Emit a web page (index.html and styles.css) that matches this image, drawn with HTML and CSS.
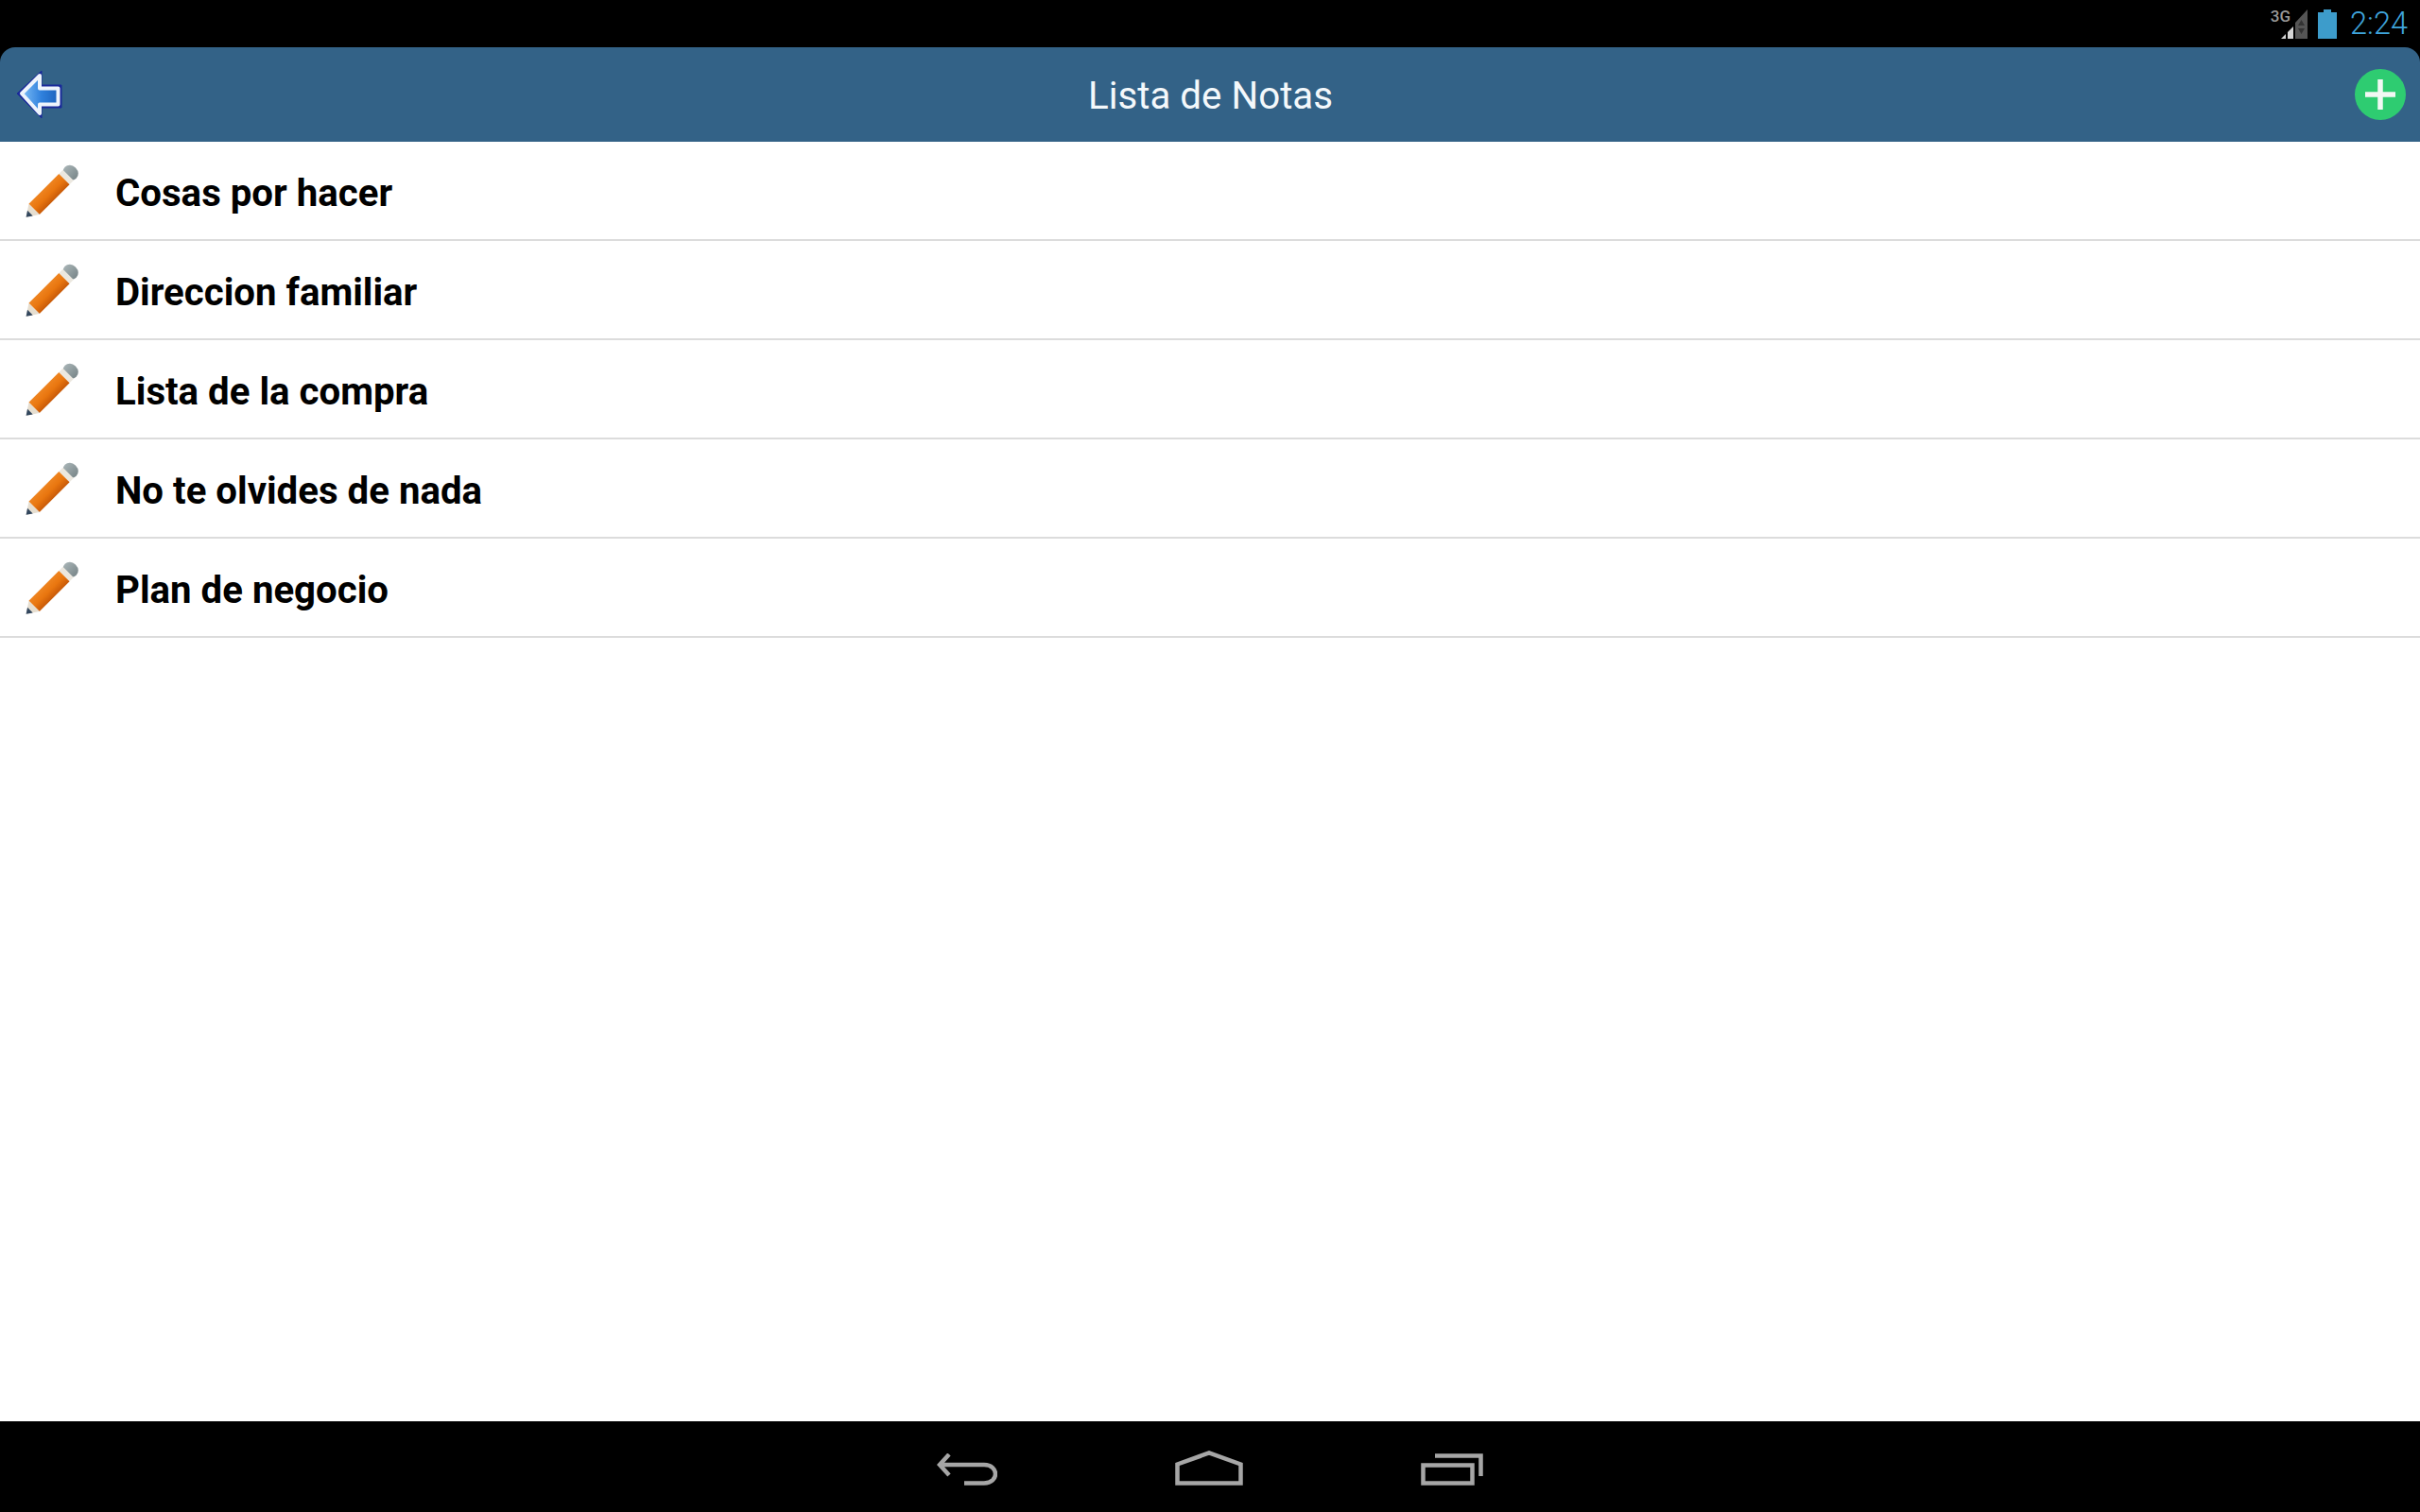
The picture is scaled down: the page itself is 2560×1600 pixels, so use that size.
FILE: index.html
```html
<!DOCTYPE html>
<html lang="es">
  <head>
    <meta charset="UTF-8" />
    <title>Lista de Notas</title>
    <link rel="stylesheet" href="styles.css">
  </head>
  <body>
    <svg class="defs" width="0" height="0">
      <defs>
        <linearGradient id="arrowFill" x1="0" y1="0" x2="1" y2="0">
          <stop offset="0" stop-color="#7cbcf6" />
          <stop offset="0.55" stop-color="#2f80dc" />
          <stop offset="1" stop-color="#1c62bd" />
        </linearGradient>
        <linearGradient id="pencilBody" gradientUnits="userSpaceOnUse" x1="0" y1="-8" x2="0" y2="8">
          <stop offset="0" stop-color="#ee8420" />
          <stop offset="0.5" stop-color="#e9760f" />
          <stop offset="1" stop-color="#c85a08" />
        </linearGradient>
        <linearGradient id="pencilEnd" gradientUnits="userSpaceOnUse" x1="0" y1="-8" x2="0" y2="8">
          <stop offset="0" stop-color="#a4b0b2" />
          <stop offset="1" stop-color="#7c898c" />
        </linearGradient>
        <g id="pencil">
          <g transform="translate(31.500 31) rotate(-45)">
            <rect x="21" y="-8.500" width="15" height="17" rx="8" fill="url(#pencilEnd)" />
            <rect x="19" y="-8" width="6" height="16" fill="#ece8e0" />
            <rect x="-26" y="-8" width="45" height="16" fill="url(#pencilBody)" />
            <path d="M-26 -8 L-38 0 L-26 8 Z" fill="#e6ded0" />
            <path d="M-32 -4 L-38 0 L-32 4 Z" fill="#33475e" />
          </g>
        </g>
      </defs>
    </svg>

    <div class="status-bar">
      <span class="net-label">3G</span>
      <svg class="signal" width="28" height="31" viewBox="0 0 28 31">
        <path d="M28 0 V31 H15 V14 Z" fill="#555" />
        <path d="M7 31 V24 L13 18 V31 Z" fill="#d4d4d4" />
        <path d="M0 31 L5 26 V31 Z" fill="#d4d4d4" />
        <path d="M18 17 L21.500 11 L25 17 Z M18 20 H25 L21.500 26 Z" fill="#333" />
      </svg>
      <svg class="battery" width="20" height="31" viewBox="0 0 20 31">
        <path d="M6 0 H14 V3 H20 V31 H0 V3 H6 Z" fill="#3d9ccb" />
      </svg>
      <span class="clock">2:24</span>
    </div>

    <header class="title-bar">
      <svg class="back-icon" width="54" height="54" viewBox="0 0 54 54">
        <path d="M28 2 L2 26 L28 52 L28 41 L49 41 L49 17 L28 17 Z" fill="#1a2a9a" stroke="#1a2a9a" stroke-width="1" stroke-linejoin="round" />
        <path d="M26 7 L7 26 L26 47 L26 37.500 L45.500 37.500 L45.500 20.500 L26 20.500 Z" fill="url(#arrowFill)" stroke="#eef4fc" stroke-width="4" stroke-linejoin="round" />
      </svg>
      <h1>Lista de Notas</h1>
      <svg class="add-icon" width="54" height="54" viewBox="0 0 54 54">
        <circle cx="27" cy="27" r="27" fill="#2ecc71" />
        <path d="M27 11 V43 M11 27 H43" stroke="#f2f8f4" stroke-width="5.500" />
      </svg>
    </header>

    <main class="notes">
      <div class="note">
        <svg class="pencil" width="60" height="60" viewBox="0 0 60 60"><use href="#pencil" /></svg>
        <span>Cosas por hacer</span>
      </div>
      <div class="note">
        <svg class="pencil" width="60" height="60" viewBox="0 0 60 60"><use href="#pencil" /></svg>
        <span>Direccion familiar</span>
      </div>
      <div class="note">
        <svg class="pencil" width="60" height="60" viewBox="0 0 60 60"><use href="#pencil" /></svg>
        <span>Lista de la compra</span>
      </div>
      <div class="note">
        <svg class="pencil" width="60" height="60" viewBox="0 0 60 60"><use href="#pencil" /></svg>
        <span>No te olvides de nada</span>
      </div>
      <div class="note">
        <svg class="pencil" width="60" height="60" viewBox="0 0 60 60"><use href="#pencil" /></svg>
        <span>Plan de negocio</span>
      </div>
    </main>

    <nav class="nav-bar">
      <svg width="64" height="34" viewBox="0 0 64 34" fill="none" stroke="#a6a6a6" stroke-width="4.500">
        <path d="M13 1 L3 12 L13 23 M3 12 H50 C66 12 66 31.500 50 31.500 H29" />
      </svg>
      <svg width="72" height="37" viewBox="0 0 72 37" fill="none" stroke="#a6a6a6" stroke-width="4.500">
        <path d="M2.500 34.500 V14.500 L36 2.500 L69.500 14.500 V34.500 Z" />
      </svg>
      <svg width="66" height="34" viewBox="0 0 66 34" fill="none" stroke="#a6a6a6" stroke-width="4.500">
        <rect x="2.500" y="12.500" width="52" height="19" />
        <path d="M15 2.500 H63.500 V24" />
      </svg>
    </nav>
  </body>
</html>
```

FILE: styles.css
```css
html,
body {
  height: 100%;
}
body {
  margin: 0;
  display: flex;
  flex-direction: column;
  background: #000;
  font-family: "Roboto", sans-serif;
  overflow: hidden;
}
.defs {
  position: absolute;
}

.status-bar {
  height: 50px;
  display: flex;
  align-items: center;
  justify-content: flex-end;
  padding-right: 13px;
  flex: none;
}
.net-label {
  font-size: 17px;
  font-weight: 500;
  color: #999;
  margin-right: -10px;
  margin-bottom: 17px;
}
.signal {
  margin-right: 11px;
}
.battery {
  margin-right: 14px;
}
.clock {
  font-size: 32.5px;
  color: #3fa4dc;
  font-weight: 300;
}

.title-bar {
  height: 100px;
  flex: none;
  display: flex;
  align-items: center;
  justify-content: space-between;
  padding: 0 15px 0 16px;
  background: #336287;
  border-radius: 16px 16px 0 0;
}
.title-bar h1 {
  margin: 0;
  padding-top: 2px;
  font-size: 40.3px;
  font-weight: 400;
  color: #f4f8fb;
}

.notes {
  flex: 1;
  background: #fff;
}
.note {
  height: 105px;
  box-sizing: border-box;
  display: flex;
  align-items: center;
  gap: 39px;
  padding-left: 23px;
  border-bottom: 2px solid #dcdcdc;
  font-size: 40.2px;
  font-weight: 700;
  color: #000;
}
.note span {
  margin-top: 6px;
}
.pencil {
  flex: none;
  overflow: visible;
}

.nav-bar {
  height: 96px;
  flex: none;
  display: flex;
  align-items: flex-end;
  justify-content: center;
  gap: 188px;
  padding-bottom: 28px;
  box-sizing: border-box;
  background: #000;
}
```
